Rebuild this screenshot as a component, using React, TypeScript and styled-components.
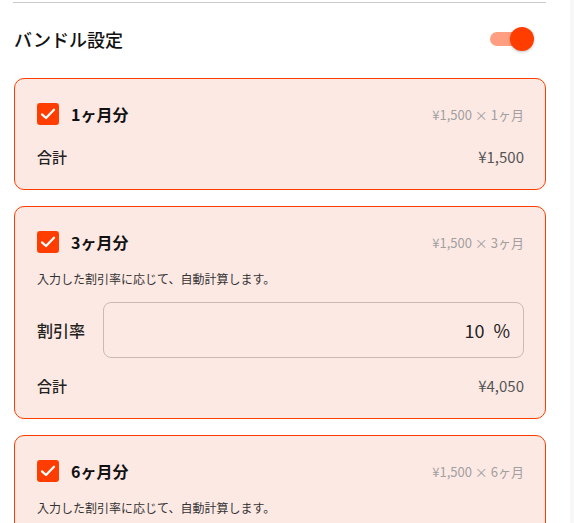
import React, { useState } from 'react';
import styled, { createGlobalStyle } from 'styled-components';

const GlobalStyle = createGlobalStyle`
  body {
    margin: 0;
    background: #ffffff;
    font-family: "Noto Sans CJK JP", "Noto Sans", sans-serif;
    color: #1a1a1a;
  }
`;

const Page = styled.div`
  display: flex;
  min-height: 100vh;
`;

const Main = styled.div`
  flex: 1;
  padding-left: 14px;
`;

const Gutter = styled.div`
  width: 4px;
  background: #f7f7f7;
`;

const Column = styled.div`
  width: 532px;
`;

const Divider = styled.div`
  margin-top: 2px;
  height: 1px;
  background: #cccccc;
  margin-left: -1px;
`;

const Header = styled.div`
  display: flex;
  align-items: center;
  justify-content: space-between;
  height: 52px;
  margin-top: 10px;
  margin-bottom: 13px;
`;

const Title = styled.h2`
  margin: 0;
  font-size: 18px;
  font-weight: 500;
  color: #111;
`;

const Switch = styled.button<{ on: boolean }>`
  position: relative;
  width: 46px;
  height: 26px;
  margin-right: 11px;
  padding: 0;
  border: none;
  background: transparent;
  cursor: pointer;

  &::before {
    content: '';
    position: absolute;
    left: 1px;
    top: 6px;
    width: 34px;
    height: 14px;
    border-radius: 7px;
    background: ${p => (p.on ? '#ff9e80' : '#bdbdbd')};
  }

  &::after {
    content: '';
    position: absolute;
    top: 1px;
    left: ${p => (p.on ? '21px' : '0')};
    width: 24px;
    height: 24px;
    border-radius: 50%;
    background: ${p => (p.on ? '#ff3d00' : '#fafafa')};
    box-shadow: 0 1px 3px rgba(0, 0, 0, 0.25);
  }
`;

const List = styled.div`
  display: flex;
  flex-direction: column;
  gap: 16px;
`;

const Card = styled.div`
  border: 1px solid #ff3d00;
  border-radius: 10px;
  background: #fde9e4;
  padding: 24px 21px 21px 22px;
`;

const CardHead = styled.div`
  display: flex;
  align-items: center;
  height: 22px;
`;

const Check = styled.span`
  display: flex;
  align-items: center;
  justify-content: center;
  width: 22px;
  height: 22px;
  border-radius: 3px;
  background: #ff3d00;
  margin-right: 12px;
`;

const PlanName = styled.span`
  font-size: 16px;
  font-weight: 700;
  color: #111;
`;

const UnitPrice = styled.span`
  margin-left: auto;
  font-size: 13px;
  color: #a0a0a0;
`;

const Desc = styled.p`
  margin: 16px 0 0;
  font-size: 12px;
  line-height: 20px;
  color: #333;
`;

const DiscountRow = styled.div`
  display: flex;
  align-items: center;
  margin-top: 13px;
`;

const FieldLabel = styled.span`
  width: 66px;
  font-size: 16px;
  font-weight: 500;
  color: #222;
`;

const InputBox = styled.label`
  flex: 1;
  display: flex;
  align-items: center;
  justify-content: flex-end;
  height: 54px;
  border: 1px solid #cdb8b2;
  border-radius: 8px;
  padding-right: 13px;
  font-size: 18px;
  color: #222;
`;

const NumberInput = styled.input`
  width: 60px;
  border: none;
  outline: none;
  background: transparent;
  text-align: right;
  font: inherit;
  color: inherit;
  padding: 0;
`;

const Unit = styled.span`
  margin-left: 9px;
`;

const TotalRow = styled.div<{ gap: number }>`
  display: flex;
  align-items: center;
  justify-content: space-between;
  margin-top: ${p => p.gap}px;
  line-height: 22px;
`;

const TotalLabel = styled.span`
  font-size: 15px;
  font-weight: 500;
  color: #222;
`;

const TotalValue = styled.span`
  font-size: 15px;
  color: #555;
`;

const CheckIcon = () => (
  <svg width="18" height="18" viewBox="0 0 18 18">
    <path d="M3 9.4 L7 13 L15 4.8" fill="none" stroke="#fff" strokeWidth="2.3" strokeLinecap="round" strokeLinejoin="round" />
  </svg>
);

const PRICE = 1500;
const plans = [
  { months: 1, rate: 0 },
  { months: 3, rate: 10 },
  { months: 6, rate: 10 },
];

const yen = (n: number) => `¥${n.toLocaleString('en-US')}`;

export default function App() {
  const [enabled, setEnabled] = useState(true);
  const [rates, setRates] = useState(plans.map(p => p.rate));

  return (
    <Page>
      <GlobalStyle />
      <Main>
        <Column>
          <Divider />
          <Header>
            <Title>バンドル設定</Title>
            <Switch on={enabled} onClick={() => setEnabled(!enabled)} aria-label="bundle" />
          </Header>
          <List>
            {plans.map((plan, i) => {
              const total = Math.round(PRICE * plan.months * (1 - rates[i] / 100));
              return (
                <Card key={plan.months}>
                  <CardHead>
                    <Check>
                      <CheckIcon />
                    </Check>
                    <PlanName>{plan.months}ヶ月分</PlanName>
                    <UnitPrice>
                      {yen(PRICE)} × {plan.months}ヶ月
                    </UnitPrice>
                  </CardHead>
                  {plan.months > 1 && (
                    <>
                      <Desc>入力した割引率に応じて、自動計算します。</Desc>
                      <DiscountRow>
                        <FieldLabel>割引率</FieldLabel>
                        <InputBox>
                          <NumberInput
                            value={rates[i]}
                            onChange={e => {
                              const next = [...rates];
                              next[i] = Number(e.target.value) || 0;
                              setRates(next);
                            }}
                          />
                          <Unit>%</Unit>
                        </InputBox>
                      </DiscountRow>
                    </>
                  )}
                  <TotalRow gap={plan.months > 1 ? 17 : 21}>
                    <TotalLabel>合計</TotalLabel>
                    <TotalValue>{yen(total)}</TotalValue>
                  </TotalRow>
                </Card>
              );
            })}
          </List>
        </Column>
      </Main>
      <Gutter />
    </Page>
  );
}
